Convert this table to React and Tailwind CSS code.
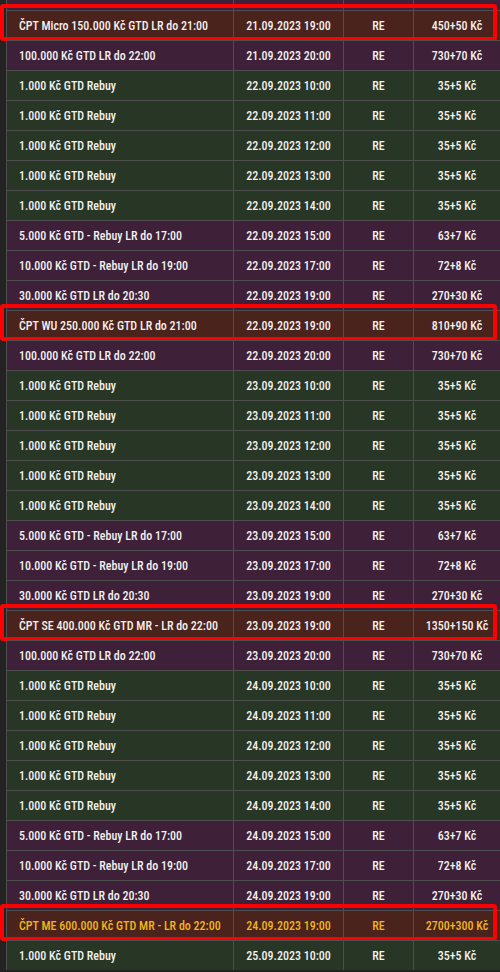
const rows = [
  { name: "ČPT Micro 150.000 Kč GTD LR do 21:00", date: "21.09.2023 19:00", buyin: "450+50 Kč", type: "main" },
  { name: "100.000 Kč GTD LR do 22:00", date: "21.09.2023 20:00", buyin: "730+70 Kč", type: "purple" },
  { name: "1.000 Kč GTD Rebuy", date: "22.09.2023 10:00", buyin: "35+5 Kč", type: "green" },
  { name: "1.000 Kč GTD Rebuy", date: "22.09.2023 11:00", buyin: "35+5 Kč", type: "green" },
  { name: "1.000 Kč GTD Rebuy", date: "22.09.2023 12:00", buyin: "35+5 Kč", type: "green" },
  { name: "1.000 Kč GTD Rebuy", date: "22.09.2023 13:00", buyin: "35+5 Kč", type: "green" },
  { name: "1.000 Kč GTD Rebuy", date: "22.09.2023 14:00", buyin: "35+5 Kč", type: "green" },
  { name: "5.000 Kč GTD - Rebuy LR do 17:00", date: "22.09.2023 15:00", buyin: "63+7 Kč", type: "purple" },
  { name: "10.000 Kč GTD - Rebuy LR do 19:00", date: "22.09.2023 17:00", buyin: "72+8 Kč", type: "purple" },
  { name: "30.000 Kč GTD LR do 20:30", date: "22.09.2023 19:00", buyin: "270+30 Kč", type: "purple" },
  { name: "ČPT WU 250.000 Kč GTD LR do 21:00", date: "22.09.2023 19:00", buyin: "810+90 Kč", type: "main" },
  { name: "100.000 Kč GTD LR do 22:00", date: "22.09.2023 20:00", buyin: "730+70 Kč", type: "purple" },
  { name: "1.000 Kč GTD Rebuy", date: "23.09.2023 10:00", buyin: "35+5 Kč", type: "green" },
  { name: "1.000 Kč GTD Rebuy", date: "23.09.2023 11:00", buyin: "35+5 Kč", type: "green" },
  { name: "1.000 Kč GTD Rebuy", date: "23.09.2023 12:00", buyin: "35+5 Kč", type: "green" },
  { name: "1.000 Kč GTD Rebuy", date: "23.09.2023 13:00", buyin: "35+5 Kč", type: "green" },
  { name: "1.000 Kč GTD Rebuy", date: "23.09.2023 14:00", buyin: "35+5 Kč", type: "green" },
  { name: "5.000 Kč GTD - Rebuy LR do 17:00", date: "23.09.2023 15:00", buyin: "63+7 Kč", type: "purple" },
  { name: "10.000 Kč GTD - Rebuy LR do 19:00", date: "23.09.2023 17:00", buyin: "72+8 Kč", type: "purple" },
  { name: "30.000 Kč GTD LR do 20:30", date: "23.09.2023 19:00", buyin: "270+30 Kč", type: "purple" },
  { name: "ČPT SE 400.000 Kč GTD MR - LR do 22:00", date: "23.09.2023 19:00", buyin: "1350+150 Kč", type: "main" },
  { name: "100.000 Kč GTD LR do 22:00", date: "23.09.2023 20:00", buyin: "730+70 Kč", type: "purple" },
  { name: "1.000 Kč GTD Rebuy", date: "24.09.2023 10:00", buyin: "35+5 Kč", type: "green" },
  { name: "1.000 Kč GTD Rebuy", date: "24.09.2023 11:00", buyin: "35+5 Kč", type: "green" },
  { name: "1.000 Kč GTD Rebuy", date: "24.09.2023 12:00", buyin: "35+5 Kč", type: "green" },
  { name: "1.000 Kč GTD Rebuy", date: "24.09.2023 13:00", buyin: "35+5 Kč", type: "green" },
  { name: "1.000 Kč GTD Rebuy", date: "24.09.2023 14:00", buyin: "35+5 Kč", type: "green" },
  { name: "5.000 Kč GTD - Rebuy LR do 17:00", date: "24.09.2023 15:00", buyin: "63+7 Kč", type: "purple" },
  { name: "10.000 Kč GTD - Rebuy LR do 19:00", date: "24.09.2023 17:00", buyin: "72+8 Kč", type: "purple" },
  { name: "30.000 Kč GTD LR do 20:30", date: "24.09.2023 19:00", buyin: "270+30 Kč", type: "purple" },
  { name: "ČPT ME 600.000 Kč GTD MR - LR do 22:00", date: "24.09.2023 19:00", buyin: "2700+300 Kč", type: "gold" },
  { name: "1.000 Kč GTD Rebuy", date: "25.09.2023 10:00", buyin: "35+5 Kč", type: "green" },
];

const bgFor = {
  main: "bg-[#4b231d] text-[#f3f0ee]",
  gold: "bg-[#4b231d] text-[#f0b41c]",
  purple: "bg-[#3e2139] text-[#f3f0ee]",
  green: "bg-[#283725] text-[#f3f0ee]",
};

function Row({ row }) {
  const marked = row.type === "main" || row.type === "gold";
  return (
    <div className={`relative flex h-[30px] border-t border-[#4e4e4e] ${bgFor[row.type]}`}>
      <div className="flex w-[226px] items-center pl-3">{row.name}</div>
      <div className="flex w-[110px] items-center justify-center border-l border-[#4e4e4e]">{row.date}</div>
      <div className="flex w-[70px] items-center justify-center border-l border-[#4e4e4e]">RE</div>
      <div className="flex flex-1 items-center justify-center border-l border-[#4e4e4e]">{row.buyin}</div>

      {/* annotation frame */}
      {marked && (
        <div className="pointer-events-none absolute -top-[7px] -bottom-[1px] -left-[7px] right-[3px] rounded-[3px] border-4 border-[#ff0000]" />
      )}
    </div>
  );
}

export default function App() {
  return (
    <div
      className="h-[972px] w-[500px] overflow-hidden bg-[#232323] pl-[6px] text-[12px] font-medium"
      style={{ fontFamily: '"Roboto Condensed", "Liberation Sans Narrow", "DejaVu Sans Condensed", Roboto, sans-serif' }}
    >
      <div className="border-l border-[#4e4e4e]">
        {/* tail of the row above */}
        <div className="flex h-[10px] bg-[#3e2139]">
          <div className="w-[226px]" />
          <div className="w-[110px] border-l border-[#4e4e4e]" />
          <div className="w-[70px] border-l border-[#4e4e4e]" />
          <div className="flex-1 border-l border-[#4e4e4e]" />
        </div>
        {rows.map((row, i) => (
          <Row key={i} row={row} />
        ))}
      </div>
    </div>
  );
}
